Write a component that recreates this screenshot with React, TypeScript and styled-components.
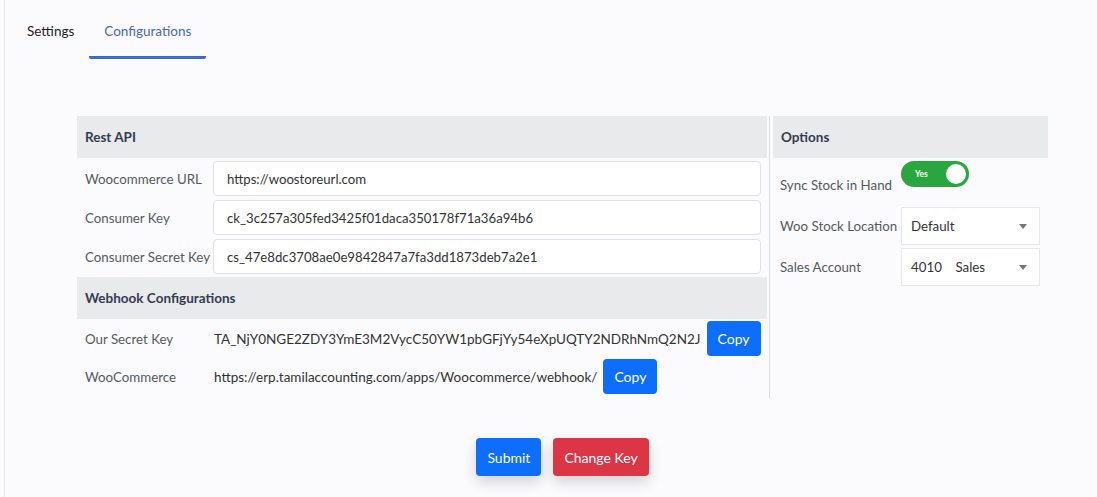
import styled, { createGlobalStyle } from 'styled-components';

const GlobalStyle = createGlobalStyle`
  html, body {
    margin: 0;
    padding: 0;
    background: #fbfbfd;
    font-family: Lato, 'Open Sans', sans-serif;
  }
  * {
    box-sizing: border-box;
  }
`;

const PAGE = styled.div`
  margin-left: 4px;
  min-height: 497px;
  border-left: 1px solid #e6e7ea;
`;

const TAB_BAR = styled.div`
  display: flex;
  padding-left: 7px;
  height: 59px;
`;

const TAB = styled.div<{ $active?: boolean }>`
  display: flex;
  align-items: flex-start;
  padding: 23px 15px 0;
  font-size: 13.5px;
  color: ${(p) => (p.$active ? '#4667cc' : '#222')};
  border-bottom: 3px solid ${(p) => (p.$active ? '#3b6bd6' : 'transparent')};
  border-radius: 0 0 2px 2px;
`;

const CONTENT = styled.div`
  margin: 57px 0 0 72px;
  width: 971px;
`;

const COLUMNS = styled.div`
  display: flex;
  align-items: flex-start;
`;

const LEFT_PANEL = styled.div`
  width: 690px;
  display: flex;
  flex-direction: column;
  padding-bottom: 4px;
`;

const DIVIDER = styled.div`
  align-self: stretch;
  width: 1px;
  margin: 0 3px 0 2px;
  background: #dcdde0;
`;

const RIGHT_PANEL = styled.div`
  width: 275px;
  display: flex;
  flex-direction: column;
`;

const SECTION_HEAD = styled.div<{ $gap?: number }>`
  height: 42px;
  margin-top: ${(p) => p.$gap ?? 0}px;
  display: flex;
  align-items: center;
  padding-left: 8px;
  background: #e9eaec;
  color: #343b50;
  font-weight: 700;
  font-size: 13.5px;
`;

const FIELD_ROW = styled.div<{ $label: number; $gap?: number }>`
  display: grid;
  grid-template-columns: ${(p) => p.$label}px 1fr;
  align-items: center;
  margin-top: ${(p) => p.$gap ?? 4}px;
`;

const LABEL = styled.div<{ $indent?: number }>`
  padding-left: ${(p) => p.$indent ?? 8}px;
  font-size: 13.3px;
  color: #555a60;
  white-space: nowrap;
`;

const INPUT = styled.div`
  height: 35px;
  margin-right: 6px;
  display: flex;
  align-items: center;
  padding-left: 13px;
  background: #fff;
  border: 1px solid #e0e1e4;
  border-radius: 4px;
  font-size: 13.2px;
  color: #333;
`;

const VALUE_LINE = styled.div`
  display: flex;
  align-items: center;
  gap: 6px;
  font-size: 13.5px;
  color: #333;
  white-space: nowrap;
`;

const BUTTON = styled.button<{ $variant?: 'primary' | 'danger'; $shadow?: boolean }>`
  border: none;
  border-radius: 4px;
  font-family: inherit;
  font-size: 14px;
  color: #fff;
  cursor: pointer;
  background: ${(p) => (p.$variant === 'danger' ? '#dc3545' : '#0d6efd')};
  box-shadow: ${(p) => (p.$shadow ? '0 6px 14px rgba(0, 0, 0, 0.16)' : 'none')};
`;

const COPY_BUTTON = styled(BUTTON)`
  height: 35px;
  padding: 0 11px;
`;

const ACTION_BUTTON = styled(BUTTON)`
  height: 38px;
  padding: 0 11px;
`;

const TOGGLE = styled.div`
  position: relative;
  width: 68px;
  height: 26px;
  border-radius: 13px;
  background: #2aa63f;
  display: flex;
  align-items: center;
  padding-left: 14px;
  margin-top: 3px;
  font-size: 8.5px;
  font-weight: 700;
  color: #fff;
  &::after {
    content: '';
    position: absolute;
    right: 3px;
    top: 3px;
    width: 20px;
    height: 20px;
    border-radius: 50%;
    background: #fff;
  }
`;

const SYNC_ROW = styled.div`
  display: grid;
  grid-template-columns: 128px auto;
  align-items: start;
`;

const SYNC_LABEL = styled(LABEL)`
  padding-top: 19px;
`;

const SELECT = styled.div`
  width: 139px;
  height: 38px;
  display: flex;
  align-items: center;
  justify-content: space-between;
  padding: 0 12px 0 9px;
  background: #fff;
  border: 1px solid #e7e8ea;
  font-size: 13.3px;
  color: #333;
`;

const CARET = styled.span`
  width: 0;
  height: 0;
  border-left: 4px solid transparent;
  border-right: 4px solid transparent;
  border-top: 5px solid #777;
`;

const ACTIONS = styled.div`
  display: flex;
  justify-content: center;
  gap: 12px;
  margin-top: 40px;
`;

const restFields = [
  { label: 'Woocommerce URL', value: 'https://woostoreurl.com' },
  { label: 'Consumer Key', value: 'ck_3c257a305fed3425f01daca350178f71a36a94b6' },
  { label: 'Consumer Secret Key', value: 'cs_47e8dc3708ae0e9842847a7fa3dd1873deb7a2e1' },
];

export function App(): JSX.Element {
  return (
    <>
      <GlobalStyle />
      <PAGE>
        <TAB_BAR>
          <TAB>Settings</TAB>
          <TAB $active>Configurations</TAB>
        </TAB_BAR>

        <CONTENT>
          <COLUMNS>
            <LEFT_PANEL>
              <SECTION_HEAD>Rest API</SECTION_HEAD>
              {restFields.map((f, i) => (
                <FIELD_ROW key={f.label} $label={136} $gap={i === 0 ? 3 : 4}>
                  <LABEL>{f.label}</LABEL>
                  <INPUT>{f.value}</INPUT>
                </FIELD_ROW>
              ))}

              <SECTION_HEAD $gap={3}>Webhook Configurations</SECTION_HEAD>
              <FIELD_ROW $label={137} $gap={2}>
                <LABEL>Our Secret Key</LABEL>
                <VALUE_LINE>
                  TA_NjY0NGE2ZDY3YmE3M2VycC50YW1pbGFjYy54eXpUQTY2NDRhNmQ2N2J
                  <COPY_BUTTON>Copy</COPY_BUTTON>
                </VALUE_LINE>
              </FIELD_ROW>
              <FIELD_ROW $label={137} $gap={3}>
                <LABEL>WooCommerce</LABEL>
                <VALUE_LINE>
                  https://erp.tamilaccounting.com/apps/Woocommerce/webhook/
                  <COPY_BUTTON>Copy</COPY_BUTTON>
                </VALUE_LINE>
              </FIELD_ROW>
            </LEFT_PANEL>

            <DIVIDER />

            <RIGHT_PANEL>
              <SECTION_HEAD $gap={0}>Options</SECTION_HEAD>
              <SYNC_ROW>
                <SYNC_LABEL $indent={7}>Sync Stock in Hand</SYNC_LABEL>
                <TOGGLE>Yes</TOGGLE>
              </SYNC_ROW>
              <FIELD_ROW $label={128} $gap={14}>
                <LABEL $indent={7}>Woo Stock Location</LABEL>
                <SELECT>
                  Default
                  <CARET />
                </SELECT>
              </FIELD_ROW>
              <FIELD_ROW $label={128} $gap={3}>
                <LABEL $indent={7}>Sales Account</LABEL>
                <SELECT>
                  <span>4010&nbsp;&nbsp;&nbsp;&nbsp;Sales</span>
                  <CARET />
                </SELECT>
              </FIELD_ROW>
            </RIGHT_PANEL>
          </COLUMNS>

          <ACTIONS>
            <ACTION_BUTTON $shadow>Submit</ACTION_BUTTON>
            <ACTION_BUTTON $variant="danger" $shadow>
              Change Key
            </ACTION_BUTTON>
          </ACTIONS>
        </CONTENT>
      </PAGE>
    </>
  );
}

export default App;
